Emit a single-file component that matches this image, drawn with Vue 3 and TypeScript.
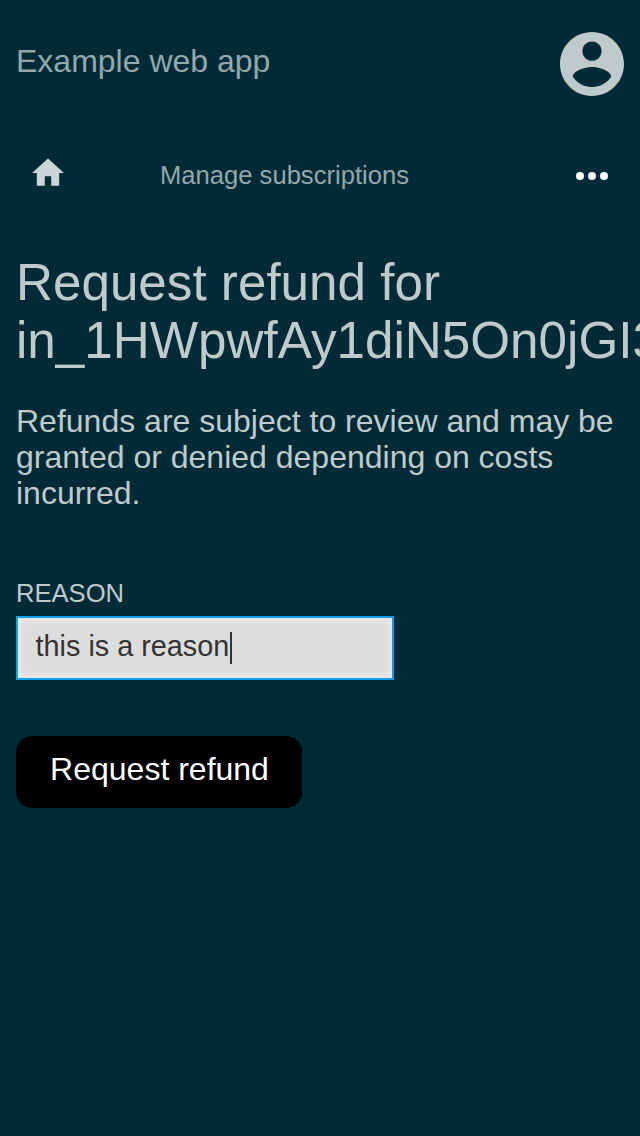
<script setup lang="ts">
import { ref } from 'vue'

const reason = ref<string>('this is a reason')
const invoice = 'in_1HWpwfAy1diN5On0jGI3'
</script>

<template>
  <div class="app">
    <header class="header">
      <div class="title">Example web app</div>
      <svg class="account" viewBox="2 2 20 20">
        <path d="M12 2C6.48 2 2 6.48 2 12s4.48 10 10 10 10-4.48 10-10S17.52 2 12 2zm0 3c1.66 0 3 1.34 3 3s-1.34 3-3 3-3-1.34-3-3 1.34-3 3-3zm0 14.2c-2.5 0-4.71-1.28-6-3.22.03-1.99 4-3.08 6-3.08 1.99 0 5.97 1.09 6 3.08-1.29 1.94-3.5 3.22-6 3.22z" />
      </svg>
    </header>
    <nav class="nav">
      <svg class="home" viewBox="0 0 32 28">
        <path d="M12.8 27.8V18.2h6.4v9.6h8V15H32L16 .6 0 15h4.8v12.8z" />
      </svg>
      <span class="crumb">Manage subscriptions</span>
      <svg class="dots" viewBox="0 0 32 8">
        <circle cx="4" cy="4" r="4" /><circle cx="16" cy="4" r="4" /><circle cx="28" cy="4" r="4" />
      </svg>
    </nav>
    <main class="content">
      <h1>Request refund for {{ invoice }}</h1>
      <p>Refunds are subject to review and may be granted or denied depending on costs incurred.</p>
      <div class="label">REASON</div>
      <div class="field"><span>{{ reason }}</span><i class="caret"></i></div>
      <button class="submit" type="button">Request refund</button>
    </main>
  </div>
</template>

<style>
body { background: #002b36; overflow: hidden; }
</style>

<style scoped>
.app { width: 640px; height: 1136px; box-sizing: border-box; overflow: hidden; background: #002b36; color: #bfcacd; font-family: "Liberation Sans", Arial, sans-serif; }
.header { height: 128px; box-sizing: border-box; padding: 0 16px; display: flex; align-items: center; justify-content: space-between; }
.title { font-size: 32px; line-height: 36px; margin-top: -6px; color: #93a7ac; }
.account { width: 64px; height: 64px; fill: #bfcacd; }
.nav { height: 96px; box-sizing: border-box; padding: 0 32px; display: flex; align-items: center; }
.home { width: 32px; height: 28px; margin-top: -8px; fill: #ccd5d7; }
.crumb { flex: 1; margin: -2px 0 0 96px; font-size: 25.6px; line-height: 30px; color: #93a7ac; }
.dots { width: 32px; height: 8px; fill: #fff; }
.content { padding: 30px 16px 0; }
h1 { margin: 0; font-size: 51.2px; line-height: 58px; font-weight: 400; }
p { margin: 33px 0 0; font-size: 32px; line-height: 36px; }
.label { margin-top: 67px; font-size: 25.6px; line-height: 30px; }
.field { width: 378px; height: 64px; margin-top: 8px; box-sizing: border-box; padding: 0 17.6px 4px; display: flex; align-items: center; border: 2px solid #109eea; background: #ddd; color: #333; font-size: 28.8px; box-shadow: inset 0 0 8px #f4f4f4; }
.caret { width: 2px; height: 32px; margin: 4px 0 0 1px; background: #333; }
.submit { display: block; width: 286px; height: 72px; margin: 56px 0 0; padding: 0 0 6px 1px; border: 0; border-radius: 16px; background: #000; color: #fff; font: 32px/36px "Liberation Sans", Arial, sans-serif; }
</style>
